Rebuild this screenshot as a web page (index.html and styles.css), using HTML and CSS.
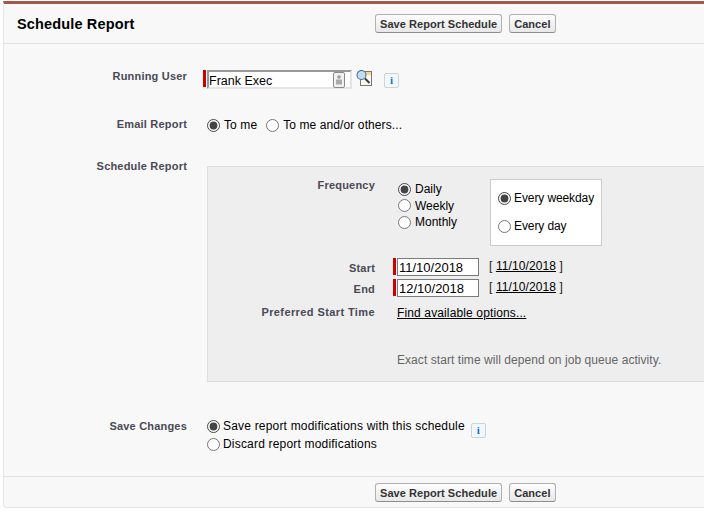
FILE: index.html
```html
<!DOCTYPE html>
<html lang="en">
<head>
    <meta charset="UTF-8">
    <title>Schedule Report</title>
    <link rel="stylesheet" href="styles.css">
</head>
<body>
    <div class="panel">
        <div class="panel-head">
            <h1>Schedule Report</h1>
            <div class="btn-group">
                <button class="btn">Save Report Schedule</button>
                <button class="btn">Cancel</button>
            </div>
        </div>

        <div class="panel-body">
            <div class="form-row row-user">
                <label class="field-label">Running User</label>
                <div class="field">
                    <span class="required"></span>
                    <span class="lookup-input">
                        <span>Frank Exec</span>
                        <svg class="person-icon" width="12" height="16" viewBox="0 0 12 16">
                            <rect x="0.5" y="0.5" width="11" height="15" rx="1.5" fill="#f1f1f1" stroke="#8a8a8a"/>
                            <circle cx="6" cy="5" r="1.8" fill="#999"/>
                            <rect x="3" y="7.5" width="6" height="5" fill="#aaa"/>
                        </svg>
                    </span>
                    <svg class="lookup-icon" width="17" height="17" viewBox="0 0 17 17">
                        <rect x="4.5" y="1.5" width="11" height="14" fill="#fbfaf0" stroke="#777"/>
                        <rect x="5" y="2" width="10" height="3" fill="#fbd68c"/>
                        <circle cx="5.5" cy="5" r="4.5" fill="#c3dcef" stroke="#47708e" stroke-width="1.1"/>
                        <path d="M9 8.5 L13.5 13" stroke="#3c3c3c" stroke-width="2"/>
                    </svg>
                    <span class="info-btn">i</span>
                </div>
            </div>

            <div class="form-row row-email">
                <label class="field-label">Email Report</label>
                <div class="field radios-inline">
                    <label class="radio"><input type="radio" name="email" checked> To me</label>
                    <label class="radio"><input type="radio" name="email"> To me and/or others...</label>
                </div>
            </div>

            <div class="form-row row-schedule">
                <label class="field-label">Schedule Report</label>
                <div class="schedule-box">
                    <div class="sub-row sub-frequency">
                        <label class="field-label">Frequency</label>
                        <div class="freq-list">
                            <label class="radio"><input type="radio" name="freq" checked> Daily</label>
                            <label class="radio"><input type="radio" name="freq"> Weekly</label>
                            <label class="radio"><input type="radio" name="freq"> Monthly</label>
                        </div>
                        <div class="freq-options">
                            <label class="radio"><input type="radio" name="day" checked> Every weekday</label>
                            <label class="radio"><input type="radio" name="day"> Every day</label>
                        </div>
                    </div>

                    <div class="sub-row sub-date">
                        <label class="field-label">Start</label>
                        <div class="date-field">
                            <span class="required"></span>
                            <input class="date-input" type="text" value="11/10/2018">
                            <span class="date-link">[ <a href="#">11/10/2018</a> ]</span>
                        </div>
                    </div>
                    <div class="sub-row sub-date sub-end">
                        <label class="field-label">End</label>
                        <div class="date-field">
                            <span class="required"></span>
                            <input class="date-input" type="text" value="12/10/2018">
                            <span class="date-link">[ <a href="#">11/10/2018</a> ]</span>
                        </div>
                    </div>
                    <div class="sub-row sub-time">
                        <label class="field-label">Preferred Start Time</label>
                        <a class="find-link" href="#">Find available options...</a>
                    </div>
                    <p class="hint">Exact start time will depend on job queue activity.</p>
                </div>
            </div>

            <div class="form-row row-save">
                <label class="field-label">Save Changes</label>
                <div class="save-list">
                    <div class="save-line">
                        <label class="radio"><input type="radio" name="save" checked> Save report modifications with this schedule</label>
                        <span class="info-btn">i</span>
                    </div>
                    <label class="radio"><input type="radio" name="save"> Discard report modifications</label>
                </div>
            </div>
        </div>

        <div class="panel-foot">
            <div class="btn-group">
                <button class="btn">Save Report Schedule</button>
                <button class="btn">Cancel</button>
            </div>
        </div>
    </div>
</body>
</html>
```

FILE: styles.css
```css
body {
    margin: 0;
    padding: 1px 0 0 3px;
    background-color: #fff;
    font-family: "Liberation Sans", Arial, sans-serif;
    font-size: 12px;
    color: #000;
}
.panel {
    height: 507px;
    box-sizing: border-box;
    background-color: #f8f8f8;
    border-top: 3px solid #a5574c;
    border-left: 1px solid #e6e6e6;
    border-bottom: 1px solid #e6e6e6;
    border-bottom-left-radius: 4px;
    display: flex;
    flex-direction: column;
}
.panel-head {
    height: 40px;
    box-sizing: border-box;
    border-bottom: 1px solid #e0e0e0;
    display: flex;
    align-items: center;
}
h1 {
    margin: 0 0 0 13px;
    width: 358px;
    font-size: 14.5px;
    font-weight: bold;
    letter-spacing: 0.15px;
}
.btn-group {
    display: flex;
    gap: 7px;
}
.btn {
    height: 19px;
    padding: 0 4px;
    background: linear-gradient(#fdfdfd, #e8e8e8);
    border: 1px solid #b0b0b0;
    border-bottom-color: #8e8e8e;
    border-radius: 3px;
    font-family: "Liberation Sans", Arial, sans-serif;
    font-size: 11px;
    font-weight: bold;
    color: #333;
    letter-spacing: 0.05px;
}
.panel-body {
    flex: 1;
}
.form-row {
    display: grid;
    grid-template-columns: 183px 1fr;
    column-gap: 16px;
}
.field-label {
    font-size: 11px;
    font-weight: bold;
    color: #4a4a56;
    text-align: right;
    letter-spacing: 0.2px;
}
.field {
    display: flex;
    align-items: flex-start;
}
.required {
    width: 3px;
    height: 17px;
    background-color: #c00;
    flex: none;
}
.radio {
    display: inline-flex;
    align-items: center;
    letter-spacing: 0.1px;
}
.radio input {
    width: 13px;
    height: 13px;
    margin: 0 4px 0 0;
    accent-color: #444;
}
.row-user {
    margin-top: 26px;
    height: 29px;
}
.lookup-input {
    width: 145px;
    height: 19px;
    margin-left: 1px;
    box-sizing: border-box;
    border: 2px solid #999;
    border-right-color: #e4e4e4;
    border-bottom-color: #e4e4e4;
    background-color: #fff;
    display: flex;
    align-items: center;
    justify-content: space-between;
    padding: 2px 5px 0 0;
    font-size: 12.5px;
}
.person-icon {
    margin-top: -2px;
}
.lookup-icon {
    margin: 0 0 0 4px;
}
.info-btn {
    width: 13px;
    height: 13px;
    border: 1px solid #c8d3dc;
    border-radius: 2px;
    background-color: #f2f7fb;
    color: #1b6fd0;
    font-family: "Liberation Serif", serif;
    font-size: 11px;
    font-weight: bold;
    line-height: 13px;
    text-align: center;
    flex: none;
}
.row-user .info-btn {
    margin: 3px 0 0 11px;
}
.row-email {
    margin-top: 19px;
    height: 22px;
}
.radios-inline {
    padding-left: 4px;
    gap: 9px;
}
.row-schedule {
    margin-top: 19px;
}
.row-schedule > .field-label {
    padding-top: 1px;
}
.schedule-box {
    margin: 7px 0 0 4px;
    height: 216px;
    box-sizing: border-box;
    background-color: #eee;
    border: 1px solid #ddd;
    border-right: 0;
}
.sub-row {
    display: grid;
    grid-template-columns: 167px auto;
    column-gap: 22px;
}
.sub-frequency {
    grid-template-columns: 167px 71px auto;
    height: 91px;
    padding-top: 12px;
    box-sizing: border-box;
}
.freq-list {
    display: flex;
    flex-direction: column;
    padding: 3px 0 0 1px;
    gap: 2px;
}
.freq-list .radio {
    height: 14.5px;
    letter-spacing: 0;
}
.freq-options {
    width: 112px;
    height: 67px;
    box-sizing: border-box;
    background-color: #fff;
    border: 1px solid #ccc;
    padding: 11px 0 0 7px;
    display: flex;
    flex-direction: column;
    gap: 14px;
    align-items: flex-start;
}
.freq-options .radio {
    letter-spacing: -0.1px;
}
.freq-options .radio input {
    margin-right: 3px;
}
.sub-date {
    height: 21px;
}
.sub-date .field-label {
    padding-top: 4px;
}
.date-field {
    display: flex;
    align-items: flex-start;
    margin-left: -4px;
}
.date-input {
    width: 82px;
    height: 18px;
    box-sizing: border-box;
    margin: 0 0 0 1px;
    padding: 0 0 0 1px;
    border: 1px solid #7b7b7b;
    font-family: "Liberation Sans", Arial, sans-serif;
    font-size: 13px;
}
.date-link {
    margin: 1px 0 0 10px;
    color: #222;
    letter-spacing: 0.1px;
}
a {
    color: #000;
}
.sub-time {
    margin-top: 6px;
}
.sub-time .field-label {
    letter-spacing: 0.4px;
}
.find-link {
    letter-spacing: 0.13px;
}
.hint {
    margin: 33px 0 0 189px;
    color: #666;
    letter-spacing: 0.06px;
}
.row-save {
    margin-top: 37px;
}
.row-save .field-label {
    padding-top: 1px;
}
.row-save .radio {
    letter-spacing: 0.19px;
}
.row-save .radio input {
    margin-right: 3px;
}
.save-list {
    padding-left: 4px;
    display: flex;
    flex-direction: column;
    align-items: flex-start;
}
.save-line {
    display: flex;
    align-items: flex-start;
    height: 18px;
}
.save-line .info-btn {
    margin: 4px 0 0 6px;
}
.panel-foot {
    height: 31px;
    box-sizing: border-box;
    border-top: 1px solid #e0e0e0;
    padding: 1px 0 0 371px;
    display: flex;
    align-items: center;
}
```
